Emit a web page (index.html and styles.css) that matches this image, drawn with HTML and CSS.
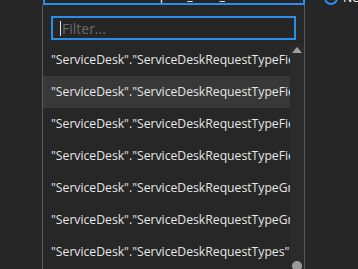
FILE: index.html
```html
<!DOCTYPE html>
<html lang="en">
<head>
    <meta charset="UTF-8">
    <title>Table picker</title>
    <link rel="stylesheet" href="styles.css">
</head>
<body>
    <div class="page">
        <div class="gutter"></div>
        <div class="column">
            <div class="select">
                <span class="select-value">"ServiceDesk"."Request_Field_Values"</span>
                <span class="caret"></span>
            </div>
            <div class="dropdown">
                <div class="filter-wrap">
                    <div class="filter">
                        <span class="cursor"></span>
                        <span class="placeholder">Filter...</span>
                    </div>
                </div>
                <div class="list-wrap">
                    <ul class="list">
                        <li>"ServiceDesk"."ServiceDeskRequestTypeFields"</li>
                        <li class="hover">"ServiceDesk"."ServiceDeskRequestTypeFieldValues"</li>
                        <li>"ServiceDesk"."ServiceDeskRequestTypeFieldOptions"</li>
                        <li>"ServiceDesk"."ServiceDeskRequestTypeFieldRules"</li>
                        <li>"ServiceDesk"."ServiceDeskRequestTypeGroups"</li>
                        <li>"ServiceDesk"."ServiceDeskRequestTypeGroupItems"</li>
                        <li>"ServiceDesk"."ServiceDeskRequestTypes"</li>
                    </ul>
                    <div class="scrollbar">
                        <span class="arrow-up"></span>
                        <span class="thumb"></span>
                    </div>
                </div>
            </div>
        </div>
        <div class="side">
            <span class="radio"></span>
            <span class="side-label">New</span>
        </div>
    </div>
</body>
</html>
```

FILE: styles.css
```css
body {
    margin: 0;
    background-color: #262626;
    font-family: "Open Sans", "Noto Sans", sans-serif;
    font-size: 12.2px;
    color: #e6e6e6;
    overflow: hidden;
    height: 269px;
}
.page {
    display: flex;
    align-items: flex-start;
    height: 269px;
    overflow: hidden;
}
.gutter {
    width: 42px;
    flex: none;
}
.column {
    width: 263px;
    flex: none;
    margin-top: -17px;
}
.select {
    box-sizing: border-box;
    height: 22px;
    margin-left: 1px;
    width: 262px;
    border: 2px solid #2b8ee6;
    display: flex;
    align-items: flex-end;
    padding: 0 8px 0 10px;
    color: #fff;
    line-height: 16px;
}
.select-value {
    flex: 1;
    white-space: nowrap;
    overflow: hidden;
    margin-bottom: -1px;
}
.caret {
    width: 0;
    height: 0;
    margin-bottom: 6px;
    border-left: 4px solid transparent;
    border-right: 4px solid transparent;
    border-top: 4px solid #c07040;
}
.dropdown {
    border-left: 1px solid #5a5a5a;
    border-right: 1px solid #5a5a5a;
    background-color: #272727;
    height: 264px;
}
.filter-wrap {
    padding: 11px 9px 4px 8px;
}
.filter {
    box-sizing: border-box;
    display: flex;
    align-items: center;
    gap: 1px;
    width: 245px;
    height: 24px;
    border: 2px solid #2b8ee6;
    background-color: #262626;
    padding: 0 7px;
}
.cursor {
    width: 1px;
    height: 15px;
    background-color: #e6e6e6;
}
.placeholder {
    color: #6a6a6a;
    font-size: 14px;
}
.list-wrap {
    display: flex;
}
.list {
    list-style: none;
    margin: 0;
    padding: 0;
    width: 247px;
    flex: none;
}
.list li {
    height: 32px;
    line-height: 32px;
    padding-left: 8px;
    white-space: nowrap;
    overflow: hidden;
}
.list li.hover {
    background-color: #383838;
}
.scrollbar {
    flex: 1;
    position: relative;
    background-color: #2b2b2b;
    height: 225px;
}
.arrow-up {
    position: absolute;
    top: 3px;
    left: 2px;
    width: 0;
    height: 0;
    border-left: 5px solid transparent;
    border-right: 5px solid transparent;
    border-bottom: 6px solid #a0a0a0;
}
.thumb {
    position: absolute;
    top: 217px;
    left: 2px;
    width: 10px;
    height: 10px;
    border-radius: 50%;
    background-color: #9a9a9a;
}
.side {
    display: flex;
    align-items: center;
    gap: 5px;
    margin-left: 19px;
    margin-top: -11px;
}
.radio {
    box-sizing: border-box;
    width: 14px;
    height: 14px;
    border: 2px solid #2b8ee6;
    border-radius: 50%;
}
.side-label {
    color: #fff;
}
```
